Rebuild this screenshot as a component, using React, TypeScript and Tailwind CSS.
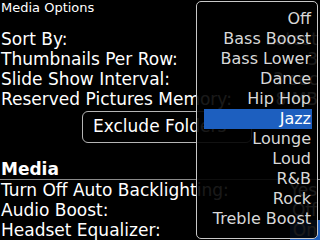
const ROWS = [
  { label: "Sort By:", value: "Latest" },
  { label: "Thumbnails Per Row:", value: "3" },
  { label: "Slide Show Interval:", value: "3 sec" },
  { label: "Reserved Pictures Memory:", value: "8 MB" },
];

const MEDIA_ROWS = [
  { label: "Turn Off Auto Backlighting:", value: "Yes", focus: false },
  { label: "Audio Boost:", value: "Off", focus: false },
  { label: "Headset Equalizer:", value: "On", focus: true },
];

const EQ = [
  "Off",
  "Bass Boost",
  "Bass Lower",
  "Dance",
  "Hip Hop",
  "Jazz",
  "Lounge",
  "Loud",
  "R&B",
  "Rock",
  "Treble Boost",
];

export default function App() {
  const selected = "Jazz";

  return (
    <div className="relative w-[320px] h-[240px] bg-black overflow-hidden text-white font-['DejaVu_Sans',sans-serif]">
      <div className="text-[13px] leading-[16px] pl-[1px]">Media Options</div>

      <div className="mt-[13px] text-[17px] leading-[20px]">
        {ROWS.map((r) => (
          <div key={r.label} className="flex justify-between pl-[1px] pr-[2px] whitespace-nowrap">
            <span>{r.label}</span>
            <span>{r.value}</span>
          </div>
        ))}

        <div className="ml-[82px] mt-[2px] w-[170px] h-[32px] border border-[#b5b5b5] rounded-[6px] pl-[10px] pt-[4px] whitespace-nowrap">
          Exclude Folders
        </div>

        <div className="mt-[16px] font-bold pl-[1px] border-b border-[#8a8a8a]">Media</div>

        {MEDIA_ROWS.map((r) => (
          <div key={r.label} className="flex justify-between pl-[1px] whitespace-nowrap">
            <span>{r.label}</span>
            <span className={r.focus ? "bg-[#1d5fbf] px-[3px]" : "pr-[3px]"}>{r.value}</span>
          </div>
        ))}
      </div>

      {/* equalizer popup over the options screen */}
      <div className="absolute left-[196px] top-[1px] w-[122px] h-[238px] rounded-[5px] border border-[#c8c8c8] bg-black/90 pt-[7px] pl-[7px] pr-[5px]">
        {EQ.map((item) => (
          <div
            key={item}
            className={
              item === selected
                ? "text-[16px] leading-[20px] text-right pr-[1px] whitespace-nowrap bg-[#1d5fbf] text-white"
                : "text-[16px] leading-[20px] text-right pr-[1px] whitespace-nowrap text-[#d8d8d8]"
            }
          >
            {item}
          </div>
        ))}
      </div>
    </div>
  );
}
